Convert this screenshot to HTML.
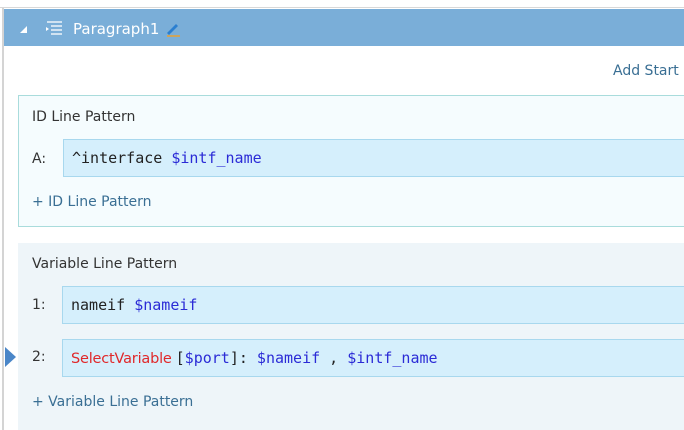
<!DOCTYPE html>
<html><head><meta charset="utf-8"><style>
*{margin:0;padding:0;box-sizing:border-box}
body{width:684px;height:430px;overflow:hidden;background:#fff;font-family:"Segoe UI","DejaVu Sans","Liberation Sans",sans-serif;font-size:13px;color:#333;position:relative}
.a{position:absolute}
.mono{font-family:"DejaVu Sans Mono","Liberation Mono",monospace;font-size:15px;color:#222}
.inp{position:absolute;background:#d5effc;border:1px solid #a8d8ee;height:38px;line-height:37px;padding-left:8px;width:640px}
.v{color:#2b2bd6}
.lbl{color:#333}
.link{color:#3a6f94}
</style></head><body>
<div class="a" style="left:0;top:0;width:684px;height:8px;background:#fff;border-bottom:1px solid #d8d8d8"></div>
<div class="a" style="left:2px;top:8px;width:2px;height:422px;background:#d4d4d4"></div>
<div class="a" style="left:4px;top:9px;width:680px;height:37px;background:#7aaed8"></div>
<svg class="a" style="left:19px;top:25px" width="10" height="10"><polygon points="1,8 8,8 8,1" fill="#fff"/></svg>
<svg class="a" style="left:44px;top:20px" width="22" height="18"><g stroke="#fff" stroke-width="1.3"><line x1="3" y1="2" x2="18" y2="2"/><line x1="7" y1="6" x2="18" y2="6"/><line x1="7" y1="10" x2="18" y2="10"/><line x1="7" y1="14" x2="18" y2="14"/></g><polygon points="2,7 5,9 2,11" fill="#fff"/></svg>
<div class="a" style="left:73px;top:20px;color:#fff;font-size:15px">Paragraph1</div>
<svg class="a" style="left:164px;top:20px" width="18" height="18"><path d="M3 13 L12 4 L14 6 L5 15 Z" fill="#2b7fd0"/><line x1="3" y1="16" x2="16" y2="16" stroke="#e8a033" stroke-width="1.5"/></svg>
<div class="a link" style="left:613px;top:63px;font-size:14px;white-space:nowrap">Add Start</div>
<div class="a" style="left:18px;top:95px;width:670px;height:132px;background:#f5fcfe;border:1px solid #a9dcdc"></div>
<div class="a lbl" style="left:32px;top:109px;font-size:14px">ID Line Pattern</div>
<div class="a lbl" style="left:32px;top:151px;font-size:14px">A:</div>
<div class="inp mono" style="left:63px;top:139px">^interface <span class="v">$intf_name</span></div>
<div class="a link" style="left:32px;top:194px;font-size:14px">+ ID Line Pattern</div>
<div class="a" style="left:18px;top:243px;width:670px;height:187px;background:#eef5f9"></div>
<div class="a lbl" style="left:32px;top:256px;font-size:14px">Variable Line Pattern</div>
<div class="a lbl" style="left:32px;top:297px;font-size:14px">1:</div>
<div class="inp mono" style="left:62px;top:286px">nameif <span class="v">$nameif</span></div>
<svg class="a" style="left:5px;top:347px" width="12" height="20"><polygon points="0,0 11,10 0,20" fill="#4a86c8"/></svg>
<div class="a lbl" style="left:32px;top:349px;font-size:14px">2:</div>
<div class="inp mono" style="left:62px;top:339px"><span style="color:#e0282a;font-family:'Segoe UI','DejaVu Sans',sans-serif;font-size:14.5px;letter-spacing:-0.2px">SelectVariable</span><span style="margin-left:4px">[<span class="v">$port</span>]: <span class="v">$nameif</span> , <span class="v">$intf_name</span></span></div>
<div class="a link" style="left:32px;top:394px;font-size:14px">+ Variable Line Pattern</div>
</body></html>
